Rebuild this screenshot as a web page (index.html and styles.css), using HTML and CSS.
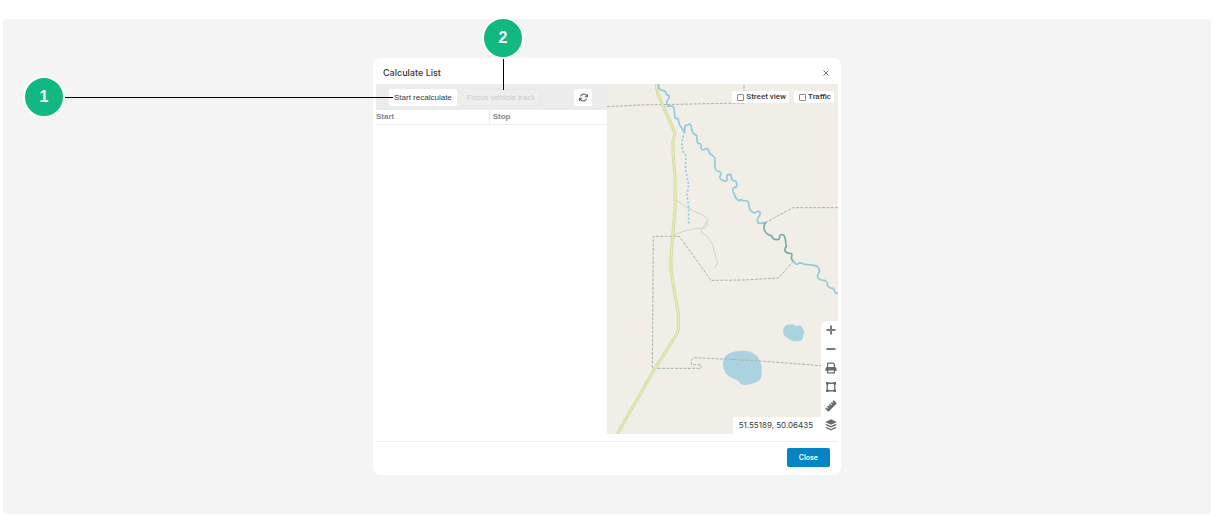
FILE: index.html
```html
<!DOCTYPE html>
<html lang="en">
<head>
<meta charset="utf-8">
<meta name="viewport" content="width=device-width, initial-scale=1">
<title>Calculate List</title>
<link rel="stylesheet" href="styles.css">
</head>
<body>
<main class="stage">
  <section class="dialog" role="dialog" aria-labelledby="dialog-title">
    <header class="dialog-header">
      <h1 class="dialog-title" id="dialog-title">Calculate List</h1>
      <button class="dismiss" type="button" aria-label="Dismiss">
        <svg class="dismiss-icon" viewBox="0 0 6 6"><path d="M.5.5l5 5M5.500.5l-5 5"/></svg>
      </button>
    </header>
    <div class="dialog-body">
      <div class="list">
        <div class="toolbar">
          <button class="tool" type="button">Start recalculate</button>
          <button class="tool" type="button" disabled>Focus vehicle track</button>
          <button class="tool refresh" type="button" aria-label="Refresh">
            <svg class="refresh-icon" viewBox="0 0 24 24"><path d="M22.500 3v7h-7M1.500 21v-7h7M4 9a9 9 0 0 1 15-3.500L22 10M2 14l3 4.500A9 9 0 0 0 20 15"/></svg>
          </button>
        </div>
        <table class="tracks">
          <thead><tr><th scope="col">Start</th><th scope="col">Stop</th></tr></thead>
        </table>
      </div>
      <div class="map">
        <svg class="map-canvas" viewBox="0 0 693 1050" preserveAspectRatio="xMinYMin slice" aria-hidden="true">
          <path class="lake" d="M539 723C550 719 562 720 566 726C575 722 586 725 587 734C594 743 593 749 588 754C589 766 583 772 572 771C557 773 549 769 542 762C531 757 527 747 529 737C530 730 533 726 539 723Z"/>
          <path class="lake" d="M348 841C347 820 361 806 381 803C405 798 428 799 441 809C453 816 458 826 461 838C466 849 464 864 463 880C460 890 448 896 437 898C422 904 409 906 399 898C391 886 379 884 364 876C353 866 347 852 348 841Z"/>
          <path class="trail" d="M207 348L234 366L268 385C294 394 305 401 302 416C300 427 294 434 287 433L299 412M199 453C217 446 240 438 266 434L283 433V447L297 453L316 480L332 537L323 552"/>
          <path class="border" d="M0 68L100 63L411 57V0M693 371H558L477 415M559 531L515 582L410 588L312 589L217 457H139L136 853H282V842H253V828L260 821L345 825L460 831L642 845"/>
          <path class="road-edge" d="M147 0L153 32L204 147L198 172V208L204 278V378L197 458L192 518V558L205 640L214 688V738L207 755L144 853L31 1050"/>
          <path class="road" d="M147 0L153 32L204 147L198 172V208L204 278V378L197 458L192 518V558L205 640L214 688V738L207 755L144 853L31 1050"/>
          <path class="stream" d="M233 143L226 165L225 198L237 216L235 255L245 302L240 333L245 365V420"/>
          <path class="river" d="M154 0L156 14Q164 20 173 21Q179 26 179 32Q187 33 187 40L180 52Q177 64 183 67L197 66Q202 72 202 81L203 97Q204 105 213 104L217 121L232 144Q234 141 234 131Q233 121 241 124Q251 115 253 130Q254 143 262 151L270 155Q268 171 273 178Q284 177 282 187Q281 198 291 198Q301 187 304 200Q309 212 316 214L324 222V249Q325 261 334 262Q345 264 341 272Q335 283 345 288Q359 296 361 286Q356 271 367 271Q374 272 373 281Q376 291 386 291Q392 301 387 310Q374 309 378 322L385 339Q391 350 398 350Q404 343 408 351Q418 347 424 354Q427 366 428 376Q435 386 443 387Q453 379 459 385Q461 394 455 398Q449 407 453 417Q463 420 477 415M559 531Q567 545 574 539Q579 534 590 540L625 545Q635 547 638 563Q629 570 633 583Q642 590 655 590Q663 596 661 605Q666 613 679 614L687 628H693"/>
          <path class="river dark" d="M477 415Q468 423 472 437Q477 452 494 455Q498 467 508 467Q520 468 518 456Q521 448 531 454Q537 466 536 478Q541 487 534 493Q532 507 547 508Q557 506 554 517Q551 525 559 531"/>
        </svg>
        <div class="layers">
          <label class="layer"><input class="check" type="checkbox">Street view</label>
          <label class="layer"><input class="check" type="checkbox">Traffic</label>
        </div>
        <output class="coords">51.55189, 50.06435</output>
        <div class="map-tools">
          <button class="map-tool" type="button" aria-label="Zoom in"><svg class="icon line" viewBox="0 0 12 12"><path d="M1.500 6h9M6 1.500v9"/></svg></button>
          <button class="map-tool" type="button" aria-label="Zoom out"><svg class="icon line" viewBox="0 0 12 12"><path d="M1.500 6h9"/></svg></button>
          <button class="map-tool" type="button" aria-label="Print"><svg class="icon" viewBox="0 0 12 12"><path fill-rule="evenodd" d="M2 1.500Q2 .5 3 .5H8.500L10 2V5H8.800V2.600L8 1.700H3.200V5H2ZM2 5H10Q11.500 5 11.500 6.500V9H10V11.500H2V9H.5V6.500Q.5 5 2 5ZM3.200 8.500V10.300H8.800V8.500Z"/></svg></button>
          <button class="map-tool" type="button" aria-label="Select area"><svg class="icon" viewBox="0 0 12 12"><path fill-rule="evenodd" d="M1 1H3.500V1.600H8.500V1H11V3.500H10.400V8.500H11V11H8.500V10.400H3.500V11H1V8.500H1.600V3.500H1ZM2.900 3.500V8.500H3.500V9.100H8.500V8.500H9.100V3.500H8.500V2.900H3.500V3.500Z"/></svg></button>
          <button class="map-tool" type="button" aria-label="Measure"><svg class="icon" viewBox="0 0 12 12"><path d="M.5 8.300L1.400 7.400L2.800 8.800L3.400 8.200L2 6.800L3.200 5.600L4.100 6.500L4.700 5.900L3.800 5L5 3.800L6.400 5.200L7 4.600L5.600 3.200L6.800 2L7.700 2.900L8.300 2.300L7.400 1.400L8.300 .5Q8.700 .2 9.100 .5L11.500 2.900Q11.800 3.300 11.500 3.700L3.700 11.500Q3.300 11.800 2.900 11.500L.5 9.100Q.2 8.700 .5 8.300Z"/></svg></button>
          <button class="map-tool" type="button" aria-label="Layers"><svg class="icon" viewBox="0 0 12 12"><path d="M6 .3L11.800 3L6 5.700L.2 3ZM1.700 5.100L6 7.100L10.300 5.100L11.800 5.900L6 8.600L.2 5.900ZM1.700 8L6 10L10.300 8L11.800 8.800L6 11.600L.2 8.800Z"/></svg></button>
        </div>
      </div>
    </div>
    <footer class="dialog-footer">
      <button class="close" type="button">Close</button>
    </footer>
    <div class="callout callout-start"><span class="badge">1</span><span class="leader"></span></div>
    <div class="callout callout-focus"><span class="badge">2</span><span class="leader"></span></div>
  </section>
</main>
</body>
</html>
```
FILE: styles.css
```css
* { box-sizing: border-box; }

body {
  margin: 0;
  padding: 19px 3px 3px;
  background: #fff;
  font-family: Inter, "Liberation Sans", sans-serif;
  font-size: 8px;
  line-height: 12px;
  color: #37383c;
}

button {
  margin: 0;
  padding: 0;
  border: 0;
  font: inherit;
  color: inherit;
  background: none;
}

svg { display: block; }

.stage {
  display: flex;
  justify-content: center;
  align-items: flex-start;
  padding: 39px 16px;
  border-radius: 4px;
  background: #f4f4f4;
}

.dialog {
  position: relative;
  flex: 0 1 468px;
  border-radius: 8px;
  background: #fff;
}

.dialog-header {
  display: flex;
  justify-content: space-between;
  align-items: center;
  padding: 4px 12px 0 10px;
  height: 26px;
}

.dialog-title {
  margin: 0;
  font-size: 9px;
  font-weight: 500;
}

.dismiss-icon {
  width: 6px;
  height: 6px;
  fill: none;
  stroke: #77787c;
}

.dialog-body {
  display: grid;
  grid-template-columns: 1fr 1fr;
  padding: 0 3px;
}

.toolbar {
  display: flex;
  align-items: center;
  gap: 4px;
  padding: 5px 15px 4px 13px;
  background: #ececec;
}

.tool {
  height: 17px;
  padding: 0 5px;
  border-radius: 2px;
  background: #fff;
  font-family: "Liberation Sans", sans-serif;
  white-space: nowrap;
}

.tool:disabled {
  border: 1px solid #e8e8e8;
  background: #eee;
  color: #ccc;
}

.refresh {
  display: grid;
  place-items: center;
  width: 18px;
  margin-left: auto;
}

.refresh-icon {
  width: 9px;
  height: 9px;
  fill: none;
  stroke: #68696d;
  stroke-width: 3;
}

.tracks {
  width: 100%;
  table-layout: fixed;
  border-collapse: collapse;
}

.tracks th {
  height: 14px;
  padding: 0 3px;
  border-bottom: 1px solid #eee;
  font-family: "Liberation Sans", sans-serif;
  text-align: left;
  color: #85868a;
}

.tracks th:first-child {
  width: 49%;
  padding-left: 0;
}

.tracks th + th { border-left: 1px solid #eee; }

.map {
  position: relative;
  height: 350px;
  overflow: hidden;
  background: #f1eee8;
}

.map-canvas {
  width: 100%;
  height: 100%;
  fill: none;
}

.lake { fill: #aad3df; }
.trail { stroke: #d3d0ce; stroke-width: 3; }
.border { stroke: #a6b5a9; stroke-width: 3; stroke-dasharray: 9 4; }
.road-edge { stroke: #d3d6a2; stroke-width: 9; }
.road { stroke: #eaedb0; stroke-width: 4; }
.stream { stroke: #92cada; stroke-width: 5; stroke-dasharray: 6 6; }
.river { stroke: #92cada; stroke-width: 5; }
.dark { stroke: #78aaad; }

.layers {
  position: absolute;
  top: 7px;
  right: 4px;
  display: flex;
  gap: 5px;
}

.layer {
  display: flex;
  align-items: center;
  gap: 2px;
  padding: 0 3px 0 5px;
  height: 12px;
  border-radius: 2px;
  background: #fff;
  font-family: Roboto, sans-serif;
  font-weight: 500;
  white-space: nowrap;
}

.check {
  appearance: none;
  width: 7px;
  height: 7px;
  margin: 0;
  border: 1px solid #8b8c90;
  border-radius: 1px;
  background: #fff;
}

.check:checked { background: #0284c7; }

.coords {
  position: absolute;
  right: 17px;
  bottom: 0;
  padding: 2px 8px 3px 6px;
  background: #fff;
}

.map-tools {
  position: absolute;
  right: 0;
  bottom: 0;
  display: grid;
  gap: 7px;
  width: 17px;
  padding: 3px 1px 3px 4px;
  border-radius: 6px 0 0 0;
  background: #fff;
}

.icon {
  width: 12px;
  height: 12px;
  fill: #6b6c72;
}

.line {
  fill: none;
  stroke: #7b7c82;
  stroke-width: 2;
}

.dialog-footer {
  display: flex;
  justify-content: flex-end;
  margin: 7px 3px 0;
  padding: 6px 8px 8px;
  border-top: 1px solid #f0f0f0;
}

.close {
  padding: 4px 12px 3px;
  border-radius: 2px;
  background: #0284c7;
  font-size: 7px;
  font-weight: 600;
  color: #fff;
}

.callout {
  position: absolute;
  display: flex;
  align-items: center;
}

.callout-start {
  right: calc(100% - 20px);
  top: 18px;
}

.callout-focus {
  left: 109px;
  top: -41px;
  flex-direction: column;
}

.badge {
  display: grid;
  place-items: center;
  width: 42px;
  height: 42px;
  border: 2px solid #fff;
  border-radius: 50%;
  background: #10b981;
  font: bold 16px/20px "Liberation Sans", sans-serif;
  color: #fff;
}

.leader { background: #000; }
.callout-start .leader { width: 328px; height: 1px; }
.callout-focus .leader { width: 1px; height: 31px; }

@media (max-width: 1180px) {
  .callout-start .leader { width: calc(50vw - 278px); min-width: 20px; }
}
```
